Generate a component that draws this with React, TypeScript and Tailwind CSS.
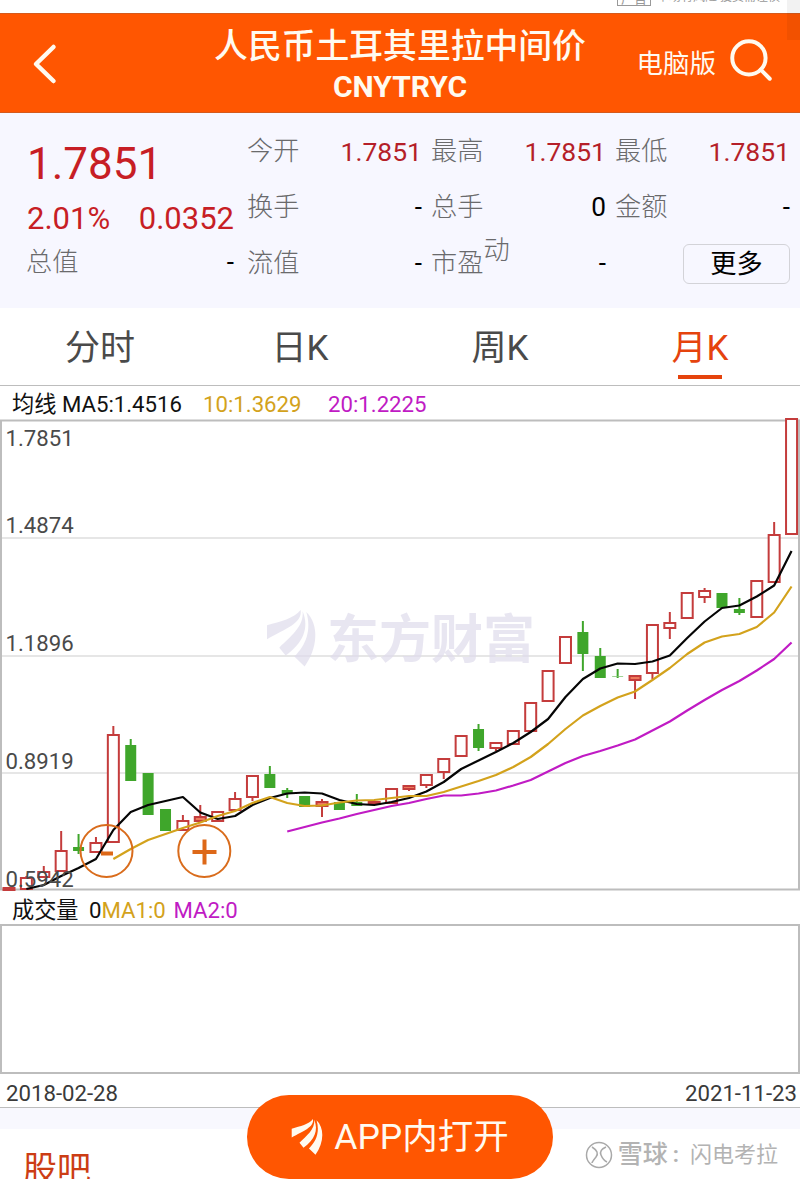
import { Search } from "lucide-react";

type Candle = { up: boolean; high: number; top: number; bottom: number; low: number };

const STEP = 17.39;
const FIRST_X = 9;

const up = (high: number, top: number, bottom: number, low: number): Candle => ({ up: true, high, top, bottom, low });
const down = (high: number, top: number, bottom: number, low: number): Candle => ({ up: false, high, top, bottom, low });

const candles: Candle[] = [
  up(887, 887, 891, 891), up(876, 877, 890, 890), up(866, 871, 878, 878), up(831, 850, 872, 872),
  down(834, 847, 851, 854), up(837, 842, 853, 853), up(726, 734, 843, 843), down(739, 745, 781, 781),
  down(773, 773, 815, 815), down(809, 809, 831, 831), up(815, 820, 831, 831), up(805, 816, 822, 822),
  up(811, 811, 822, 822), up(792, 798, 811, 811), up(775, 775, 798, 801), down(766, 774, 788, 788),
  down(788, 790, 794, 798), down(796, 796, 807, 807), up(799, 801, 807, 817), down(802, 802, 810, 810),
  down(794, 802, 806, 806), up(801, 801, 805, 805), up(788, 788, 804, 804), up(785, 785, 790, 791),
  up(774, 774, 786, 788), up(758, 758, 773, 779), up(735, 735, 757, 757), down(724, 729, 748, 751),
  up(742, 742, 749, 751), up(730, 730, 745, 745), up(702, 702, 732, 732), up(670, 670, 702, 702),
  up(636, 636, 664, 664), down(621, 632, 654, 671), down(648, 656, 678, 678), down(669, 676, 676.5, 678),
  up(675, 675, 681, 699), up(624, 624, 674, 679), up(612, 622, 629, 639), up(592, 592, 619, 619),
  up(588, 590, 598, 603), down(593, 593, 608, 608), down(598, 609, 613, 615), up(580, 580, 618, 618),
  up(522, 534, 583, 583), up(418, 418, 535, 535),
];

// each average starts at a different candle, so keep the offset beside the values
const averages = [
  {
    start: 1,
    color: "#050505",
    values: [
      889, 885, 876, 868, 859, 830, 812, 805, 801, 797, 812.5, 819, 816, 805, 798, 793.5, 792.5, 793.5, 800, 804,
      805, 802, 798, 791.5, 782, 769, 760.5, 752, 743, 732, 719, 697, 679, 668.5, 663.5, 664, 661.5, 655.5, 638,
      621.5, 608, 605.5, 596.5, 585.5, 551,
    ],
  },
  {
    start: 6,
    color: "#d3a21c",
    values: [
      859, 849, 840, 834, 828, 822.5, 816, 811, 803, 797, 803, 806, 805.5, 802.5, 800.5, 800, 798, 796, 796, 792,
      786.5, 781, 775, 767, 757, 744, 729, 715.5, 706, 697.5, 691.5, 680, 668, 654, 642.5, 636.5, 634, 627, 612.5,
      586.5,
    ],
  },
  {
    start: 16,
    color: "#c01bc4",
    values: [
      831.5, 827, 822.5, 818.5, 814, 810, 806, 803, 799, 795.5, 795.5, 793.5, 790.5, 785.5, 780, 771.5, 763, 756,
      751, 745.5, 739.5, 730.5, 721.5, 710.5, 700, 690, 681, 670.5, 659, 642.5,
    ],
  },
];

const axis = [
  { label: "1.7851", y: 446 },
  { label: "1.4874", y: 532.5 },
  { label: "1.1896", y: 651 },
  { label: "0.8919", y: 769 },
  { label: "0.5942", y: 887 },
];

const quotes = [
  [
    { label: "今开", value: "1.7851", red: true },
    { label: "换手", value: "-" },
    { label: "流值", value: "-" },
  ],
  [
    { label: "最高", value: "1.7851", red: true },
    { label: "总手", value: "0" },
    { label: "市盈", sup: "动", value: "-" },
  ],
  [
    { label: "最低", value: "1.7851", red: true },
    { label: "金额", value: "-" },
  ],
] as { label: string; value: string; red?: boolean; sup?: string }[][];

const tabs = ["分时", "日K", "周K", "月K"];

function Feathers() {
  return (
    <>
      <path d="M0 46C42 34 80 26 101 0C107 40 55 56 0 88Z" />
      <path d="M107 4C112 50 68 82 37 113L56 137C108 100 128 55 107 4Z" />
      <path d="M118 6C134 60 118 105 82 140L113 170C152 115 158 45 118 6Z" />
    </>
  );
}

function AdStrip() {
  return (
    <div className="flex h-[13px] items-start justify-end overflow-hidden pr-[24px] text-[#999]">
      <div className="-mt-[13px] flex items-center gap-[6px]">
        <span className="h-[18px] w-[34px] border border-[#999] text-center text-[13px] leading-[19px]">广告</span>
        <span className="w-[119px] text-[12px] leading-[20px] whitespace-nowrap">市场有风险 投资需谨慎</span>
      </div>
    </div>
  );
}

function Header() {
  return (
    <header className="relative flex h-[100px] items-center justify-center border-y border-[#d55a1c] bg-[#ff5601] text-[#fffaf0]">
      <svg className="absolute top-[29px] left-[32px]" width="25" height="43" viewBox="0 0 25 43" fill="none">
        <path d="M21.500 4L4 21L21.500 38" stroke="#fffaf0" strokeWidth="4.500" strokeLinecap="round" strokeLinejoin="round" />
      </svg>
      <div className="flex flex-col items-center pt-[7px]">
        <h1 className="text-[33.8px] leading-[40px] font-medium">人民币土耳其里拉中间价</h1>
        <div className="text-[30px] leading-[40px] font-bold">CNYTRYC</div>
      </div>
      <div className="absolute top-[22px] right-[26px] flex items-center gap-[12px]">
        <span className="pt-[8px] text-[26.500px] leading-[40px]">电脑版</span>
        <Search className="-m-[2px] h-[50px] w-[50px]" strokeWidth={1.9} />
      </div>
    </header>
  );
}

function QuotePanel() {
  return (
    <section className="flex h-[195px] bg-[#f7f7ff] pt-[10px] pr-[10px] pl-[27px] text-[26.200px]">
      <div className="mr-[13px] flex w-[207px] flex-col text-[#c71e25]">
        <div className="mt-[11px] h-[60px] text-[44px] leading-[60px]">1.7851</div>
        <div className="flex h-[50px] justify-between text-[31px] leading-[50px]">
          <span>2.01%</span>
          <span>0.0352</span>
        </div>
        <div className="flex h-[38px] items-center justify-between">
          <span className="-ml-px font-light text-[#6a6a6c]">总值</span>
          <span className="text-black">-</span>
        </div>
      </div>
      <div className="flex gap-[9px]">
        {quotes.map((col, i) => (
          <div key={i} className="flex w-[175px] flex-col">
            {col.map((q) => (
              <div key={q.label} className="flex h-[56px] items-center justify-between leading-[56px]">
                <span className="flex font-light text-[#6a6a6c]">
                  {q.label}
                  {q.sup && <span className="-mt-[13px]">{q.sup}</span>}
                </span>
                <span className={q.red ? "pt-px text-[26.500px] text-[#b51f29]" : "text-black"}>{q.value}</span>
              </div>
            ))}
            {i === 2 && (
              <button className="mt-[9px] h-[40px] w-[107px] self-end rounded-[6px] border border-[#d3d3d8] leading-[38px] text-black">
                更多
              </button>
            )}
          </div>
        ))}
      </div>
    </section>
  );
}

function Tabs() {
  return (
    <nav className="grid h-[78px] grid-cols-4 border-b border-[#bdbdbd] text-[35px]">
      {tabs.map((t) => {
        const active = t === "月K";
        return (
          <button key={t} className={`flex flex-col items-center ${active ? "text-[#e5430d]" : "text-[#4a4a4a]"}`}>
            <span className="h-[67px] leading-[81px]">{t}</span>
            {active && <span className="h-[4px] w-[44px] bg-[#e5430d]" />}
          </button>
        );
      })}
    </nav>
  );
}

function KLineChart() {
  return (
    <svg className="block overflow-visible" width="800" height="470" viewBox="0 420 800 470">
      <g stroke="#dedede" strokeWidth="1.500">
        {[538, 656, 773].map((y) => (
          <line key={y} x1="2" x2="798" y1={y} y2={y} />
        ))}
      </g>
      <rect x="1" y="420.500" width="798" height="469" fill="none" stroke="#bdbdbd" strokeWidth="2" />

      <g fill="#dfdcec" opacity="0.7">
        <g transform="translate(267 610) scale(0.333)">
          <Feathers />
        </g>
        <text x="327" y="658" fontSize="52" fontWeight="700">
          东方财富
        </text>
      </g>

      {candles.map((c, i) => {
        const x = FIRST_X + i * STEP;
        const color = c.up ? "#c43c3c" : "#3fa62b";
        const h = c.bottom - c.top;
        return (
          <g key={i}>
            {c.high < c.top && <line x1={x} x2={x} y1={c.high} y2={c.top} stroke={color} strokeWidth="2" />}
            {c.low > c.bottom && <line x1={x} x2={x} y1={c.bottom} y2={c.low} stroke={color} strokeWidth="2" />}
            {c.up ? (
              <rect
                x={x - 5.5}
                y={c.top + 1}
                width="11"
                height={h - 2}
                fill={h < 7 ? "#ee7a5c" : "#fff"}
                stroke={color}
                strokeWidth="2"
              />
            ) : (
              <rect x={x - 5.5} y={c.top} width="11" height={h} fill={color} />
            )}
          </g>
        );
      })}

      {averages.map((a) => (
        <polyline
          key={a.color}
          points={a.values.map((y, i) => `${FIRST_X + (a.start + i) * STEP},${y}`).join(" ")}
          fill="none"
          stroke={a.color}
          strokeWidth="2.200"
          strokeLinejoin="round"
        />
      ))}

      <g fill="#4a4a4a" fontSize="22.200">
        {axis.map((a) => (
          <text key={a.label} x="5.500" y={a.y}>
            {a.label}
          </text>
        ))}
      </g>

      <g fill="none" stroke="#d96c1c" strokeWidth="2">
        <circle cx="106.500" cy="851" r="26" />
        <circle cx="204.300" cy="851" r="26" />
      </g>
      <path d="M101 853.500H113M192.500 852H216.500M204.500 839.500V864.500" stroke="#dd6818" strokeWidth="4" />
    </svg>
  );
}

function SnowballMark() {
  return (
    <div className="flex items-center text-[#b3b3b3]">
      <svg width="28" height="28" viewBox="0 0 28 28" fill="none" stroke="#a9a9a9" strokeWidth="1.500">
        <circle cx="14" cy="14" r="12.500" />
        <path d="M7 6Q15 11 11 16T7 22M21 6Q14 9 16 14T22 21" />
      </svg>
      <span className="ml-[5px] text-[25px] font-medium">雪球</span>
      <span className="ml-[5px] text-[22px] font-bold">:</span>
      <span className="ml-[11px] text-[22px]">闪电考拉</span>
    </div>
  );
}

export default function App() {
  return (
    <div className="relative h-[1179px] w-[800px] overflow-hidden bg-white font-[Roboto,'Noto_Sans_CJK_SC',sans-serif]">
      <AdStrip />
      <Header />
      <QuotePanel />
      <Tabs />

      <div className="flex h-[34px] items-center pt-[3px] pl-[12px] text-[22.200px] whitespace-pre text-[#111]">
        <span className="w-[191px]">均线 MA5:1.4516</span>
        <span className="w-[125px] text-[#d3a21c]">10:1.3629</span>
        <span className="text-[#c01bc4]">20:1.2225</span>
      </div>
      <KLineChart />

      <div className="flex h-[34px] items-center pt-[8px] pl-[12px] text-[22.200px] text-[#111]">
        <span className="w-[77px]">成交量</span>
        <span>0</span>
        <span className="w-[72px] text-[#d3a21c]">MA1:0</span>
        <span className="text-[#c01bc4]">MA2:0</span>
      </div>
      <div className="h-[150px] border-2 border-[#bdbdbd]" />
      <div className="flex h-[34px] items-center justify-between border-b border-[#bdbdbd] pt-[7px] pr-[3px] pl-[6px] text-[22.200px] text-[#3a3a3a]">
        <span>2018-02-28</span>
        <span>2021-11-23</span>
      </div>
      <div className="h-[21px] bg-[#f8f8fe]" />
      <div className="flex justify-between pr-[22px] pl-[23px]">
        <h2 className="mt-[15px] text-[34px] leading-[50px] text-[#cc3d14]">股吧</h2>
        <div className="mt-[7px] h-[32px]">
          <SnowballMark />
        </div>
      </div>

      <button className="absolute top-[1095px] left-[247px] flex h-[84px] w-[306px] items-center justify-center gap-[10px] rounded-full bg-[#ff5601] text-[35.500px] text-[#fffaf0]">
        <svg width="33" height="36" viewBox="0 0 150 171" fill="#fffaf0">
          <Feathers />
        </svg>
        <span className="pt-[2px]">APP内打开</span>
      </button>
      {/* scrollbar thumb */}
      <div className="absolute top-0 right-0 h-[40px] w-[13px] bg-black/5" />
    </div>
  );
}
